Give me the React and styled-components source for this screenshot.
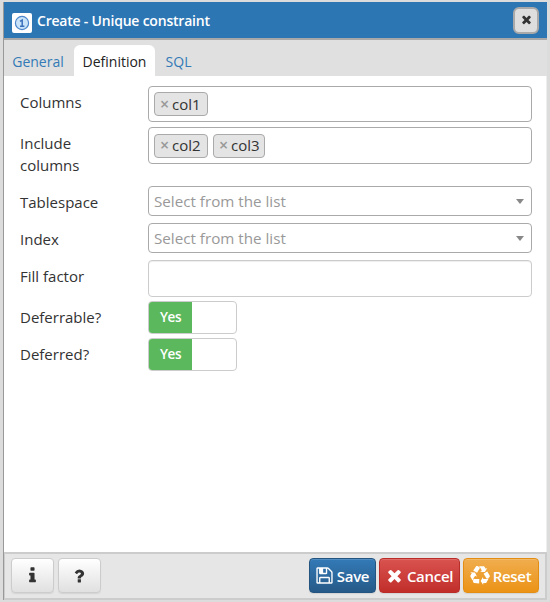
import React from "react";
import styled, { createGlobalStyle } from "styled-components";

const GlobalStyle = createGlobalStyle`
  * { box-sizing: border-box; }
  body { margin: 0; background: #dcdcdc; font-family: "Open Sans", "Noto Sans", sans-serif; color: #333; }
  button { font-family: inherit; }
`;

const Page = styled.main`
  width: 550px;
  height: 602px;
  padding: 2px 3px 2px 3px;
  background: #dcdcdc;
  overflow: hidden;
`;

const Dialog = styled.section`
  width: 544px;
  height: 598px;
  display: flex;
  flex-direction: column;
  border-left: 1px solid #999;
`;

const TitleBar = styled.header`
  height: 38px;
  flex: none;
  display: flex;
  align-items: center;
  padding: 0 8px 0 8px;
  background: #2c76b4;
  border-bottom: 2px solid #a8a8a8;
`;

const TitleIcon = styled.svg`
  width: 20px;
  height: 20px;
  margin-top: 5px;
  flex: none;
`;

const Title = styled.h1`
  flex: 1;
  margin: 2px 0 0 5px;
  color: #fff;
  font-size: 14px;
  line-height: 36px;
  font-weight: 600;
  letter-spacing: -0.21px;
  white-space: nowrap;
`;

const CloseButton = styled.button`
  width: 26px;
  height: 27px;
  margin-top: 1px;
  padding: 0 0 2px;
  display: flex;
  align-items: center;
  justify-content: center;
  border: 2px solid #a9a9a9;
  border-radius: 6px;
  background: #dedede;
  color: #333;
`;

const Glyph = styled.svg`
  width: ${(p) => p.$size}px;
  height: ${(p) => p.$size}px;
  flex: none;
  fill: currentColor;
`;

const Tabs = styled.nav`
  height: 36px;
  flex: none;
  display: flex;
  align-items: flex-end;
  background: #e0e0e0;
`;

const Tab = styled.a`
  width: ${(p) => p.$width}px;
  height: 31px;
  padding-top: 1px;
  text-align: center;
  font-size: 14px;
  line-height: 32px;
  border-radius: 6px 6px 0 0;
  color: ${(p) => (p.$active ? "#222" : "#337ab7")};
  background: ${(p) => (p.$active ? "#fff" : "transparent")};
`;

const FirstTab = styled(Tab)`
  padding-right: 2px;
`;

const Form = styled.div`
  flex: 1;
  padding: 10px 14px 0 16px;
  background: #fff;
  border-right: 1px solid #eee;
`;

const Field = styled.div`
  height: ${(p) => p.$height}px;
  display: flex;
  align-items: flex-start;
`;

const Label = styled.label`
  width: 128px;
  padding: 5px 30px 0 0;
  flex: none;
  font-size: 15px;
  line-height: 22px;
`;

const Control = styled.div`
  width: 385px;
  height: ${(p) => p.$height}px;
  display: flex;
  align-items: center;
  border: 1px solid ${(p) => (p.$light ? "#ccc" : "#aaa")};
  border-radius: 4px;
  background: #fff;
  box-shadow: ${(p) => (p.$light ? "inset 0 1px 1px rgba(0,0,0,.075)" : "none")};
`;

const TagList = styled(Control)`
  gap: 5px;
  padding: 0 5px;
`;

const TagBox = styled.span`
  height: 24px;
  width: ${(p) => p.$width}px;
  display: flex;
  align-items: center;
  padding: 0 0 1px 5px;
  border: 1px solid #aaa;
  border-radius: 4px;
  background: #e4e4e4;
  font-size: 15px;
  line-height: 20px;
  white-space: nowrap;
`;

const Remove = styled.span`
  width: 12px;
  font-size: 16px;
  font-weight: 600;
  color: #999;
`;

const Select = styled(Control)`
  justify-content: space-between;
  padding: 0 7px 0 5px;
  font-size: 15.2px;
  line-height: 26px;
  color: #999;
`;

const Caret = styled.i`
  border: 4px solid transparent;
  border-top: 5px solid #888;
  border-bottom: 0;
`;

const Switch = styled.div`
  width: 89px;
  height: 33px;
  display: flex;
  overflow: hidden;
  border: 1px solid #ccc;
  border-radius: 4px;
  background: #fff;
`;

const SwitchOn = styled.span`
  width: 43px;
  background: #5cb85c;
  color: #fff;
  text-align: center;
  font-size: 13.5px;
  line-height: 30px;
  font-weight: 600;
  letter-spacing: -0.4px;
`;

const Footer = styled.footer`
  height: 48px;
  flex: none;
  display: flex;
  align-items: center;
  padding: 0 6px 1px 6px;
  gap: 3px;
  background: #e6e6e6;
  border: 2px solid #ccc;
  border-left: 1px solid #ccc;
`;

const HelpActions = styled.div`
  display: flex;
  flex: 1;
  gap: 4px;
`;

const tones = {
  plain: ["#fff", "#e0e0e0", "#ccc", "#333"],
  save: ["#337ab7", "#265a88", "#245580", "#fff"],
  cancel: ["#d9534f", "#c12e2a", "#b92c28", "#fff"],
  reset: ["#f0ad4e", "#eb9316", "#e38d13", "#fff"],
};

const Button = styled.button`
  width: ${(p) => p.$width}px;
  height: 35px;
  flex: none;
  display: flex;
  align-items: center;
  justify-content: center;
  gap: 3px;
  padding: 0 1px 0 0;
  border: 1px solid ${(p) => tones[p.$tone][2]};
  border-radius: 4px;
  color: ${(p) => tones[p.$tone][3]};
  background: linear-gradient(${(p) => tones[p.$tone][0]}, ${(p) => tones[p.$tone][1]});
  box-shadow: inset 0 1px 0 rgba(255, 255, 255, 0.15), 0 1px 1px rgba(0, 0, 0, 0.08);
  font-size: 15px;
  font-weight: 600;
  letter-spacing: -0.3px;
  white-space: nowrap;
`;

const icons = {
  times: "M1490 1322q0 40-28 68l-136 136q-28 28-68 28t-68-28l-294-294-294 294q-28 28-68 28t-68-28l-136-136q-28-28-28-68t28-68l294-294-294-294q-28-28-28-68t28-68l136-136q28-28 68-28t68 28l294 294 294-294q28-28 68-28t68 28l136 136q28 28 28 68t-28 68l-294 294 294 294q28 28 28 68z",
  info: "M1216 1344v128q0 26-19 45t-45 19h-512q-26 0-45-19t-19-45v-128q0-26 19-45t45-19h64v-384h-64q-26 0-45-19t-19-45v-128q0-26 19-45t45-19h384q26 0 45 19t19 45v576h64q26 0 45 19t19 45zm-128-1152v192q0 26-19 45t-45 19h-256q-26 0-45-19t-19-45v-192q0-26 19-45t45-19h256q26 0 45 19t19 45z",
  question: "M1088 1256v240q0 16-12 28t-28 12h-240q-16 0-28-12t-12-28v-240q0-16 12-28t28-12h240q16 0 28 12t12 28zm316-600q0 54-15.5 101t-35 76.5-55 59.5-57.5 43.5-61 35.5q-41 23-68.5 65t-27.5 67q0 17-12 32.5t-28 15.5h-240q-15 0-25.5-18.5t-10.5-37.5v-45q0-83 65-156.5t143-108.5q59-27 84-56t25-76q0-42-46.5-74t-107.5-32q-65 0-108 29-35 25-107 115-13 16-31 16-12 0-25-8l-164-125q-13-10-15.5-25t5.5-28q160-266 464-266 80 0 161 31t146 83 106 127.5 41 158.5z",
  save: "M512 1536h768v-384h-768v384zm896 0h128v-896q0-14-10-38.5t-20-34.5l-281-281q-10-10-34-20t-39-10v416q0 40-28 68t-68 28h-576q-40 0-68-28t-28-68v-416h-128v1280h128v-416q0-40 28-68t68-28h832q40 0 68 28t28 68v416zm-384-928v-320q0-13-9.5-22.5t-22.5-9.5h-192q-13 0-22.5 9.5t-9.5 22.5v320q0 13 9.5 22.5t22.5 9.5h192q13 0 22.5-9.5t9.5-22.5zm640 32v928q0 40-28 68t-68 28h-1344q-40 0-68-28t-28-68v-1344q0-40 28-68t68-28h928q40 0 88 20t76 48l280 280q28 28 48 76t20 88z",
  recycle: "M836 1169l-15 368-2 22-420-29q-36-3-67-31.5t-47-65.5q-11-27-14.5-55t4-65 12-55 21.5-64 19-53q78 12 509 28zm-387-586l180 379-147-92q-63 72-111.5 144.5t-72.5 125-39.5 94.5-18.5 63l-4 21-190-357q-17-26-18-56t6-47l8-18q35-63 114-188l-140-86zm1231 517l-188 359q-12 29-36.5 46.5t-43.5 20.5l-18 4q-71 7-219 12l8 164-230-367 211-362 7 173q170 16 283 5t170-33zm-785-924q-47 63-265 435l-317-187-19-12 225-356q20-31 60-45t80-10q24 2 48.5 12t42 21 41.5 33 36 34.5 36 39.5 32 35zm655 307l212 363q18 37 12.5 76t-27.5 74q-13 20-33 37t-38 28-48.5 22-47 16-51.5 14-46 12q-34-72-265-436l313-195zm-143-226l142-83-220 373-419-20 151-86q-34-89-75-166t-75.5-123.5-64.5-80-47-46.5l-17-13 405 1q31-3 58 10.5t39 28.5l11 15q39 61 112 190z",
};

const Icon = ({ name, size }) => (
  <Glyph $size={size} viewBox="0 0 1792 1792" aria-hidden="true">
    <path d={icons[name]} />
  </Glyph>
);

const Tag = ({ children, width }) => (
  <TagBox $width={width}>
    <Remove>×</Remove>
    {children}
  </TagBox>
);

export default function App() {
  return (
    <Page>
      <GlobalStyle />
      <Dialog>
        <TitleBar>
          <TitleIcon viewBox="0 0 20 20">
            <rect width="20" height="20" rx="2" fill="#fff" />
            <circle cx="10" cy="10" r="6.6" fill="#c9e4f8" stroke="#4d86cc" strokeWidth="1.2" />
            <path d="M8 8.3 10.2 7v6M8 13.2h4.4" fill="none" stroke="#3b70bc" strokeWidth="1.5" />
          </TitleIcon>
          <Title>Create - Unique constraint</Title>
          <CloseButton aria-label="Close">
            <Icon name="times" size={13} />
          </CloseButton>
        </TitleBar>
        <Tabs>
          <FirstTab $width={70}>General</FirstTab>
          <Tab $width={81} $active>Definition</Tab>
          <Tab $width={47}>SQL</Tab>
        </Tabs>
        <Form>
          <Field $height={41}>
            <Label>Columns</Label>
            <TagList $height={36}><Tag width={54}>col1</Tag></TagList>
          </Field>
          <Field $height={59}>
            <Label>Include columns</Label>
            <TagList $height={37}><Tag width={54}>col2</Tag><Tag width={52}>col3</Tag></TagList>
          </Field>
          <Field $height={37}>
            <Label>Tablespace</Label>
            <Select $height={30}>Select from the list<Caret /></Select>
          </Field>
          <Field $height={37}>
            <Label>Index</Label>
            <Select $height={30}>Select from the list<Caret /></Select>
          </Field>
          <Field $height={41}>
            <Label>Fill factor</Label>
            <Control $height={37} $light />
          </Field>
          <Field $height={37}>
            <Label>Deferrable?</Label>
            <Switch><SwitchOn>Yes</SwitchOn></Switch>
          </Field>
          <Field $height={37}>
            <Label>Deferred?</Label>
            <Switch><SwitchOn>Yes</SwitchOn></Switch>
          </Field>
        </Form>
        <Footer>
          <HelpActions>
            <Button $tone="plain" $width={43} aria-label="Information"><Icon name="info" size={19} /></Button>
            <Button $tone="plain" $width={43} aria-label="Help"><Icon name="question" size={18} /></Button>
          </HelpActions>
          <Button $tone="save" $width={67}><Icon name="save" size={19} />Save</Button>
          <Button $tone="cancel" $width={81}><Icon name="times" size={19} />Cancel</Button>
          <Button $tone="reset" $width={76}><Icon name="recycle" size={20} />Reset</Button>
        </Footer>
      </Dialog>
    </Page>
  );
}
